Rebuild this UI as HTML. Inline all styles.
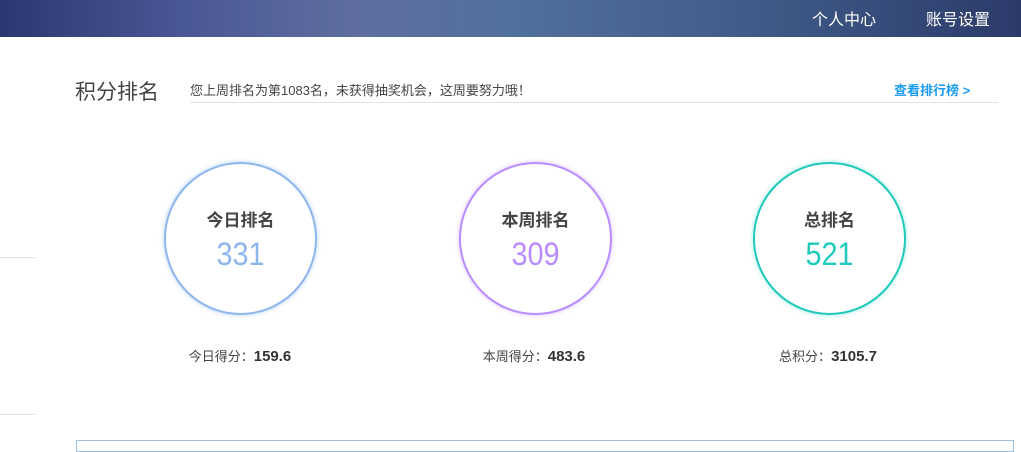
<!DOCTYPE html>
<html><head><meta charset="utf-8"><style>
body{margin:0;width:1021px;height:443px;overflow:hidden;background:#fff;font-family:"Liberation Sans","Noto Sans CJK SC",sans-serif;position:relative}
.hd{position:absolute;left:0;top:0;width:1021px;height:37px;background:linear-gradient(90deg,#2b3770 0%,#4a5795 18%,#5f6e9f 35%,#52709c 50%,#3f5a86 75%,#2c3a6a 100%)}
.hd span{position:absolute;top:6px;color:#fff;font-size:16px}
.t{position:absolute;left:75px;top:76px;font-size:21px;color:#444}
.msg{position:absolute;left:190px;top:80px;font-size:13px;color:#444}
.lk{position:absolute;left:894px;top:80px;font-size:13px;color:#1a9bef;font-weight:bold}
.ln{position:absolute;left:190px;top:102px;width:808px;height:1px;background:#e3e3e3}
.c{position:absolute;top:162px;width:153px;height:153px;border-radius:50%;border:2px solid;text-align:center;box-sizing:border-box}
.c b{display:block;margin-top:42px;font-size:17px;color:#444}
.c i{display:block;font-style:normal;font-size:32px;margin-top:5px;transform:scaleX(0.9)}
.s{position:absolute;top:346px;font-size:13px;color:#444;width:200px;text-align:center}
.s b{font-size:15px;color:#333}
.sl{position:absolute;left:0;width:35px;height:1px;background:#e3e3e3}
</style></head><body>
<div class="hd"><span style="left:812px">个人中心</span><span style="left:926px">账号设置</span></div>
<div class="t">积分排名</div>
<div class="msg">您上周排名为第1083名，未获得抽奖机会，这周要努力哦！</div>
<div class="lk">查看排行榜 &gt;</div>
<div class="ln"></div>
<div class="c" style="left:164px;border-color:#8db6ee;box-shadow:0 0 5px #b5d0f5"><b>今日排名</b><i style="color:#8db6ee">331</i></div>
<div class="c" style="left:459px;border-color:#b98cff;box-shadow:0 0 5px #d9c2ff"><b>本周排名</b><i style="color:#b98cff">309</i></div>
<div class="c" style="left:753px;border-color:#1fc9bb;box-shadow:0 0 5px #9be8e0"><b>总排名</b><i style="color:#1fc9bb">521</i></div>
<div class="s" style="left:140px">今日得分：<b>159.6</b></div>
<div class="s" style="left:434px">本周得分：<b>483.6</b></div>
<div class="s" style="left:728px">总积分：<b>3105.7</b></div>
<div class="sl" style="top:257px"></div>
<div class="sl" style="top:414px"></div>
<div style="position:absolute;left:76px;top:440px;width:936px;height:10px;border:1px solid #9ebfdc"></div>
</body></html>
